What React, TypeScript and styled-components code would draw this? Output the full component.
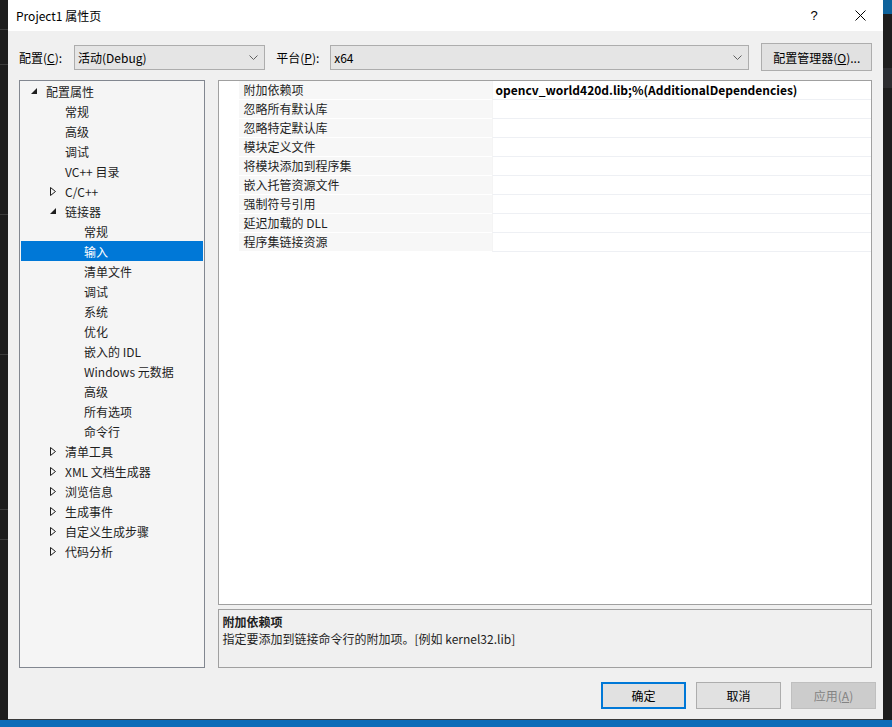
import React from "react";
import styled, { createGlobalStyle, css } from "styled-components";

const GlobalStyle = createGlobalStyle`
  html, body {
    margin: 0;
    padding: 0;
    background: #1e1e1e;
  }
  body {
    font-family: "Noto Sans CJK SC", "Noto Sans", sans-serif;
    font-size: 12px;
    color: #000;
  }
  * {
    box-sizing: border-box;
  }
`;

type TreeItem = {
  label: string;
  level: number;
  arrow?: "open" | "closed";
  selected?: boolean;
};

const treeItems: TreeItem[] = [
  { label: "配置属性", level: 0, arrow: "open" },
  { label: "常规", level: 1 },
  { label: "高级", level: 1 },
  { label: "调试", level: 1 },
  { label: "VC++ 目录", level: 1 },
  { label: "C/C++", level: 1, arrow: "closed" },
  { label: "链接器", level: 1, arrow: "open" },
  { label: "常规", level: 2 },
  { label: "输入", level: 2, selected: true },
  { label: "清单文件", level: 2 },
  { label: "调试", level: 2 },
  { label: "系统", level: 2 },
  { label: "优化", level: 2 },
  { label: "嵌入的 IDL", level: 2 },
  { label: "Windows 元数据", level: 2 },
  { label: "高级", level: 2 },
  { label: "所有选项", level: 2 },
  { label: "命令行", level: 2 },
  { label: "清单工具", level: 1, arrow: "closed" },
  { label: "XML 文档生成器", level: 1, arrow: "closed" },
  { label: "浏览信息", level: 1, arrow: "closed" },
  { label: "生成事件", level: 1, arrow: "closed" },
  { label: "自定义生成步骤", level: 1, arrow: "closed" },
  { label: "代码分析", level: 1, arrow: "closed" },
];

const properties = [
  { name: "附加依赖项", value: "opencv_world420d.lib;%(AdditionalDependencies)" },
  { name: "忽略所有默认库", value: "" },
  { name: "忽略特定默认库", value: "" },
  { name: "模块定义文件", value: "" },
  { name: "将模块添加到程序集", value: "" },
  { name: "嵌入托管资源文件", value: "" },
  { name: "强制符号引用", value: "" },
  { name: "延迟加载的 DLL", value: "" },
  { name: "程序集链接资源", value: "" },
];

// horizontal rules of the editor that peeks out behind the dialog
const editorLines = [30, 35, 150, 140, 155, 30];

const Chevron = () => (
  <svg width="9" height="5" viewBox="0 0 9 5">
    <path d="M0.5 0.5 L4.5 4.5 L8.5 0.5" fill="none" stroke="#606060" strokeWidth="1" />
  </svg>
);

const OpenArrow = () => (
  <svg width="6" height="6" viewBox="0 0 6 6">
    <polygon points="0,6 6,6 6,0" fill="#1e1e1e" />
  </svg>
);

const ClosedArrow = () => (
  <svg width="6" height="9" viewBox="0 0 6 9">
    <polygon points="0.5,0.5 5.5,4.5 0.5,8.5" fill="none" stroke="#1e1e1e" strokeWidth="1" />
  </svg>
);

const CloseIcon = () => (
  <svg width="11" height="11" viewBox="0 0 11 11">
    <path d="M0.5 0.5 L10.5 10.5 M10.5 0.5 L0.5 10.5" stroke="#000" strokeWidth="1" />
  </svg>
);

export default function App() {
  return (
    <>
      <GlobalStyle />
      <Page>
        <Desk>
          <EditorStrip>
            {editorLines.map((h, i) => (
              <EditorLine key={i} $height={h} />
            ))}
          </EditorStrip>
          <Dialog>
            <TitleBar>
              <Title>Project1 属性页</Title>
              <CaptionButton>?</CaptionButton>
              <CaptionButton>
                <CloseIcon />
              </CaptionButton>
            </TitleBar>
            <Body>
              <ConfigRow>
                <FieldLabel $width={55}>
                  配置(<u>C</u>):
                </FieldLabel>
                <Combo $width={192}>
                  <span>活动(Debug)</span>
                  <Chevron />
                </Combo>
                <FieldLabel $width={54} $gap={11}>
                  平台(<u>P</u>):
                </FieldLabel>
                <Combo $width={421}>
                  <span>x64</span>
                  <Chevron />
                </Combo>
                <ManagerButton>
                  配置管理器(<u>O</u>)...
                </ManagerButton>
              </ConfigRow>
              <Main>
                <Tree>
                  {treeItems.map((item, i) => (
                    <TreeRow key={i} $level={item.level} $selected={item.selected}>
                      <ArrowSlot>
                        {item.arrow === "open" && <OpenArrow />}
                        {item.arrow === "closed" && <ClosedArrow />}
                      </ArrowSlot>
                      {item.label}
                    </TreeRow>
                  ))}
                </Tree>
                <RightColumn>
                  <PropertyGrid>
                    {properties.map((p, i) => (
                      <PropertyRow key={i}>
                        <MarginCell />
                        <NameCell>{p.name}</NameCell>
                        <ValueCell>{p.value}</ValueCell>
                      </PropertyRow>
                    ))}
                  </PropertyGrid>
                  <Description>
                    <DescTitle>附加依赖项</DescTitle>
                    <div>指定要添加到链接命令行的附加项。[例如 kernel32.lib]</div>
                  </Description>
                </RightColumn>
              </Main>
            </Body>
            <Footer>
              <DialogButton $variant="default">确定</DialogButton>
              <DialogButton>取消</DialogButton>
              <DialogButton $variant="disabled">
                应用(<u>A</u>)
              </DialogButton>
            </Footer>
          </Dialog>
          <RightStrip />
        </Desk>
        <StatusBar />
      </Page>
    </>
  );
}

const Page = styled.div`
  width: 892px;
  height: 727px;
  display: flex;
  flex-direction: column;
  overflow: hidden;
  background: #1e1e1e;
`;

const Desk = styled.div`
  display: flex;
  height: 720px;
`;

const EditorStrip = styled.div`
  width: 8px;
  display: flex;
  flex-direction: column;
  background: #1e1e1e;
`;

const EditorLine = styled.div<{ $height: number }>`
  height: ${(p) => p.$height}px;
  border-bottom: 1px solid #3c3c3c;
`;

const RightStrip = styled.div`
  flex: 1;
  background: linear-gradient(#0e639c 0 14px, #1e1e1e 14px 68px, #2d2d30 68px 88px, #1e1e1e 88px);
`;

const StatusBar = styled.div`
  height: 7px;
  background: #0c6cb8;
`;

const Dialog = styled.div`
  width: 875px;
  height: 720px;
  display: flex;
  flex-direction: column;
  background: #f0f0f0;
  border-bottom: 1px solid #3a3a3a;
`;

const TitleBar = styled.div`
  height: 31px;
  flex-shrink: 0;
  display: flex;
  align-items: center;
  background: #fff;
  padding-left: 8px;
`;

const Title = styled.div`
  flex: 1;
  font-size: 12px;
  color: #000;
`;

const CaptionButton = styled.div`
  width: 46px;
  height: 31px;
  display: flex;
  align-items: center;
  justify-content: center;
  font-family: "Liberation Sans", sans-serif;
  font-size: 13px;
  color: #000;
`;

const Body = styled.div`
  padding: 12px 11px 0 11px;
  display: flex;
  flex-direction: column;
`;

const ConfigRow = styled.div`
  display: flex;
  align-items: center;
  height: 28px;
`;

const FieldLabel = styled.div<{ $width: number; $gap?: number }>`
  width: ${(p) => p.$width}px;
  margin-left: ${(p) => p.$gap ?? 0}px;
  flex-shrink: 0;
  white-space: nowrap;
`;

const Combo = styled.div<{ $width: number }>`
  width: ${(p) => p.$width}px;
  height: 25px;
  display: flex;
  align-items: center;
  justify-content: space-between;
  padding: 0 6px 0 3px;
  background: #e5e5e5;
  border: 1px solid #adadad;
`;

const ManagerButton = styled.div`
  width: 111px;
  height: 28px;
  margin-left: 12px;
  display: flex;
  align-items: center;
  justify-content: center;
  background: #e1e1e1;
  border: 1px solid #adadad;
`;

const Main = styled.div`
  display: flex;
  gap: 13px;
  margin-top: 9px;
  height: 588px;
`;

const Tree = styled.div`
  width: 186px;
  height: 100%;
  border: 1px solid #828790;
  background: #f5f5f5;
  padding: 0 1px;
`;

const TreeRow = styled.div<{ $level: number; $selected?: boolean }>`
  height: 20px;
  display: flex;
  align-items: center;
  padding-left: ${(p) => 6 + p.$level * 19}px;
  white-space: nowrap;
  color: #1e1e1e;
  ${(p) =>
    p.$selected &&
    css`
      background: #0078d7;
      color: #fff;
    `}
`;

const ArrowSlot = styled.span`
  width: 19px;
  flex-shrink: 0;
  display: flex;
  align-items: center;
  padding-left: 4px;
`;

const RightColumn = styled.div`
  width: 656px;
  display: flex;
  flex-direction: column;
  gap: 4px;
`;

const PropertyGrid = styled.div`
  height: 526px;
  border: 1px solid #a0a0a0;
  background: #fff;
`;

const PropertyRow = styled.div`
  display: grid;
  grid-template-columns: 20px 253px 1fr;
  height: 19px;
`;

const MarginCell = styled.div`
  background: #fff;
`;

const NameCell = styled.div`
  background: #f7f7f7;
  border-bottom: 1px solid #fff;
  padding-left: 5px;
  line-height: 18px;
  white-space: nowrap;
  color: #1e1e1e;
`;

const ValueCell = styled.div`
  border-bottom: 1px solid #eef0f4;
  border-left: 1px solid #f4f4f4;
  padding-left: 3px;
  line-height: 18px;
  font-weight: bold;
  white-space: nowrap;
  color: #000;
`;

const Description = styled.div`
  height: 59px;
  border: 1px solid #a0a0a0;
  background: #f0f0f0;
  padding: 3px 4px;
  line-height: 17px;
  color: #1e1e1e;
`;

const DescTitle = styled.div`
  font-weight: bold;
`;

const Footer = styled.div`
  display: flex;
  justify-content: flex-end;
  gap: 10px;
  padding: 14px 7px 0 0;
`;

const DialogButton = styled.div<{ $variant?: "default" | "disabled" }>`
  width: 85px;
  height: 27px;
  display: flex;
  align-items: center;
  justify-content: center;
  background: #e1e1e1;
  border: 1px solid #adadad;
  color: #000;
  ${(p) =>
    p.$variant === "default" &&
    css`
      border: 2px solid #0078d7;
    `}
  ${(p) =>
    p.$variant === "disabled" &&
    css`
      background: #cccccc;
      border-color: #bfbfbf;
      color: #838383;
    `}
`;
